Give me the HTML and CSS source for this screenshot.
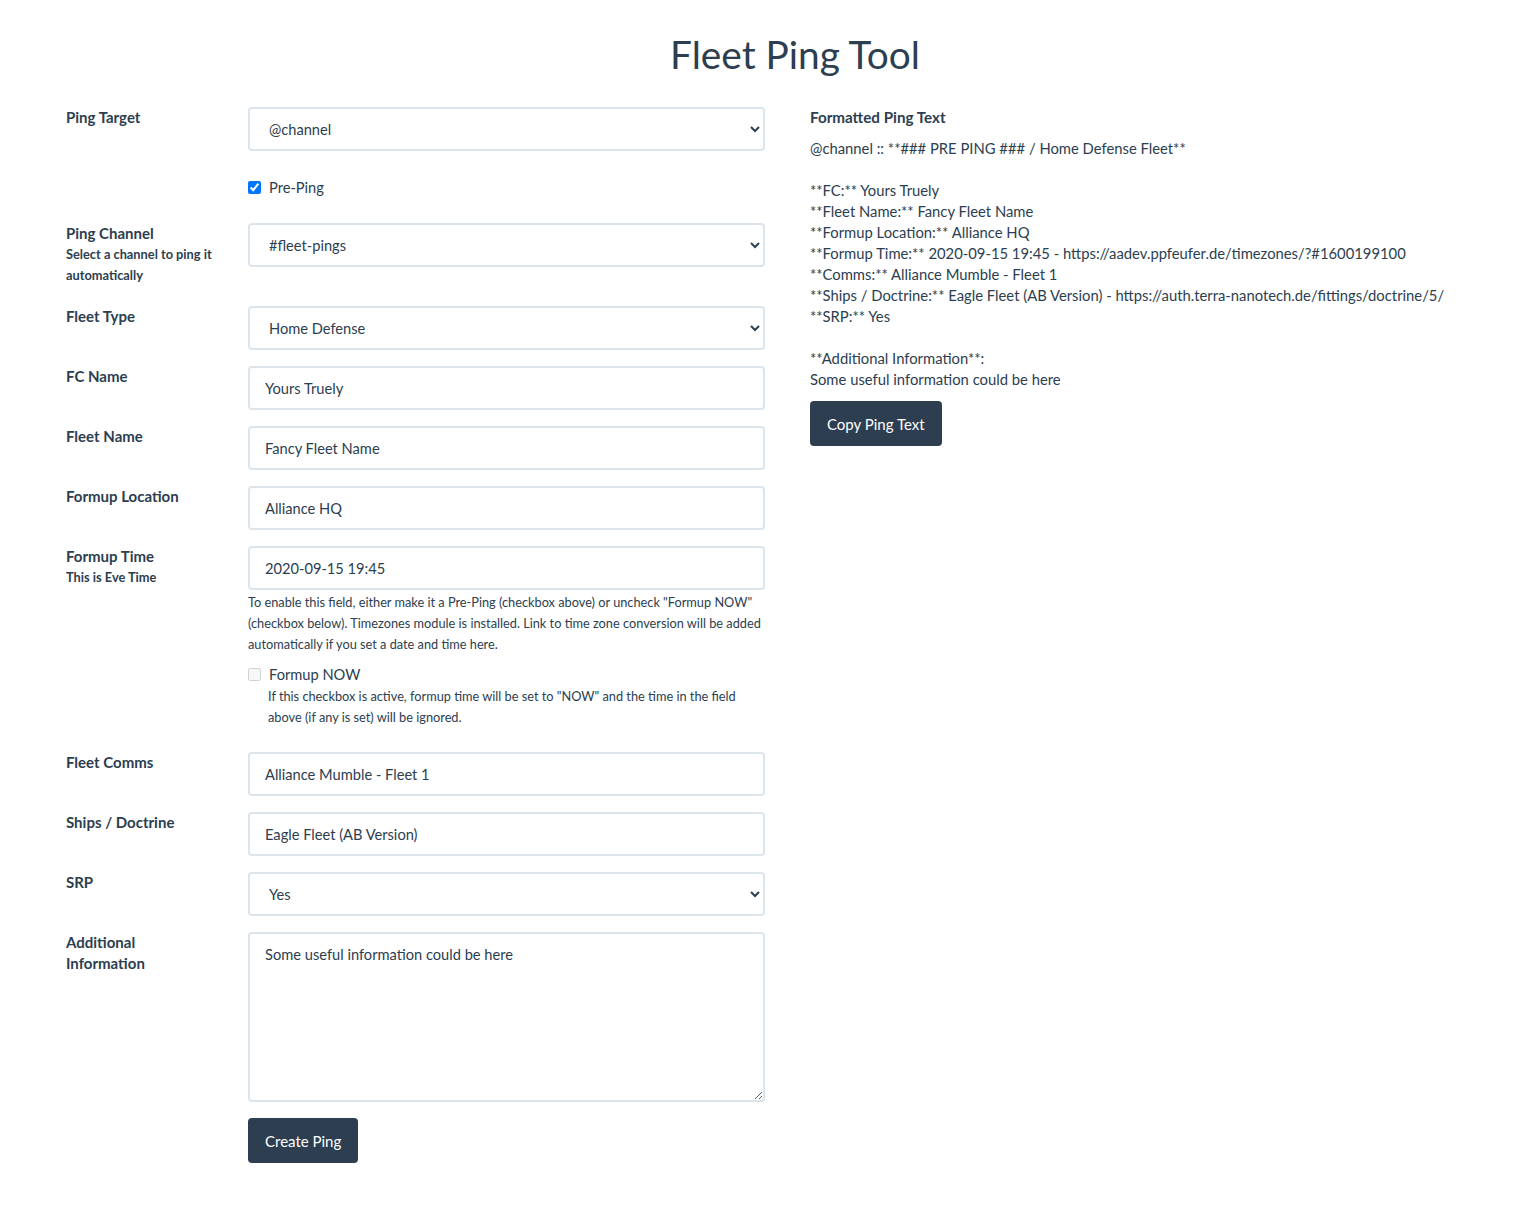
FILE: index.html
```html
<!DOCTYPE html>
<html lang="en">
<head>
<meta charset="utf-8">
<title>Fleet Ping Tool</title>
<link rel="stylesheet" href="styles.css">
</head>
<body>
<div class="page">
  <h1 class="title">Fleet Ping Tool</h1>
  <div class="row">
    <div class="col">
      <form class="form">
        <div class="group">
          <label class="label">Ping Target</label>
          <div class="field">
            <select class="control"><option>@channel</option></select>
          </div>
        </div>
        <div class="group check-row">
          <div class="label"></div>
          <div class="field">
            <label class="check"><input type="checkbox" checked> <span>Pre-Ping</span></label>
          </div>
        </div>
        <div class="group">
          <label class="label">Ping Channel<small>Select a channel to ping it automatically</small></label>
          <div class="field">
            <select class="control"><option>#fleet-pings</option></select>
          </div>
        </div>
        <div class="group">
          <label class="label">Fleet Type</label>
          <div class="field">
            <select class="control"><option>Home Defense</option></select>
          </div>
        </div>
        <div class="group">
          <label class="label">FC Name</label>
          <div class="field"><input class="control" type="text" value="Yours Truely"></div>
        </div>
        <div class="group">
          <label class="label">Fleet Name</label>
          <div class="field"><input class="control" type="text" value="Fancy Fleet Name"></div>
        </div>
        <div class="group">
          <label class="label">Formup Location</label>
          <div class="field"><input class="control" type="text" value="Alliance HQ"></div>
        </div>
        <div class="group group-time">
          <label class="label">Formup Time<small>This is Eve Time</small></label>
          <div class="field">
            <input class="control" type="text" value="2020-09-15 19:45">
            <small class="help">To enable this field, either make it a Pre-Ping (checkbox above) or uncheck "Formup NOW" (checkbox below). Timezones module is installed. Link to time zone conversion will be added automatically if you set a date and time here.</small>
            <label class="check check-now"><input type="checkbox" disabled> <span>Formup NOW</span></label>
            <small class="help help-indent">If this checkbox is active, formup time will be set to "NOW" and the time in the field above (if any is set) will be ignored.</small>
          </div>
        </div>
        <div class="group">
          <label class="label">Fleet Comms</label>
          <div class="field"><input class="control" type="text" value="Alliance Mumble - Fleet 1"></div>
        </div>
        <div class="group">
          <label class="label">Ships / Doctrine</label>
          <div class="field"><input class="control" type="text" value="Eagle Fleet (AB Version)"></div>
        </div>
        <div class="group">
          <label class="label">SRP</label>
          <div class="field">
            <select class="control"><option>Yes</option></select>
          </div>
        </div>
        <div class="group">
          <label class="label">Additional Information</label>
          <div class="field"><textarea class="control area">Some useful information could be here</textarea></div>
        </div>
        <div class="group">
          <div class="label"></div>
          <div class="field"><button type="button" class="btn">Create Ping</button></div>
        </div>
      </form>
    </div>
    <div class="col col-right">
      <h5 class="out-title">Formatted Ping Text</h5>
      <div class="out-text">@channel :: **### PRE PING ### / Home Defense Fleet**

**FC:** Yours Truely
**Fleet Name:** Fancy Fleet Name
**Formup Location:** Alliance HQ
**Formup Time:** 2020-09-15 19:45 - https://aadev.ppfeufer.de/timezones/?#1600199100
**Comms:** Alliance Mumble - Fleet 1
**Ships / Doctrine:** Eagle Fleet (AB Version) - https://auth.terra-nanotech.de/fittings/doctrine/5/
**SRP:** Yes

**Additional Information**:
Some useful information could be here</div>
      <button type="button" class="btn btn-copy">Copy Ping Text</button>
    </div>
  </div>
</div>
</body>
</html>
```

FILE: styles.css
```css
html, body {
  margin: 0;
  padding: 0;
  overflow-x: hidden;
  background: #fff;
}
body {
  font-family: Lato, "Open Sans", sans-serif;
  font-size: 14.65px;
  line-height: 21px;
  color: #212529;
}
.page {
  width: 1488px;
  margin-left: 51px;
}
.title {
  margin: 0;
  padding: 29px 0 27px;
  height: 51px;
  line-height: 51px;
  font-size: 38.8px;
  font-weight: 400;
  color: #2c3e50;
  text-align: center;
}
.row {
  display: flex;
}
.col {
  width: 714px;
  padding: 0 15px;
}
.form {
  margin: 0;
}
.group {
  display: flex;
  margin-bottom: 16px;
}
.label {
  width: 148px;
  margin-right: 34px;
  font-size: 15px;
  font-weight: 700;
  color: #2c3e50;
  display: block;
  padding-bottom: 4px;
}
.label small {
  display: block;
  font-size: 12.8px;
  line-height: 21px;
}
.field {
  width: 517px;
}
.control {
  display: block;
  box-sizing: border-box;
  width: 517px;
  height: 44px;
  margin: 0;
  padding: 0 15px;
  border: 2px solid #dce4ec;
  border-radius: 4px;
  background: #fff;
  font-family: Lato, "Open Sans", sans-serif;
  font-size: 14.65px;
  color: #2c3e50;
  outline: none;
}
select.control {
  padding-left: 15px;
}
.area {
  height: 170px;
  padding-top: 10px;
  line-height: 21px;
  resize: vertical;
}
.check-row {
  padding: 10px 0 9px;
}
.check {
  display: flex;
  align-items: center;
  height: 21px;
  color: #2c3e50;
}
.check input {
  margin: 0 8px 0 0;
  width: 13px;
  height: 13px;
}
.help {
  display: block;
  font-size: 12.75px;
  line-height: 21px;
  color: #2c3e50;
  margin-top: 2px;
}
.check-now {
  margin-top: 9px;
}
.help-indent {
  margin-top: 1px;
  padding-left: 20px;
}
.group-time {
  margin-bottom: 24px;
}
.btn {
  display: inline-block;
  height: 45px;
  padding: 0 17px;
  border: 0;
  border-radius: 4px;
  background: #2c3e50;
  color: #fff;
  font-family: Lato, "Open Sans", sans-serif;
  font-size: 15px;
  cursor: pointer;
}
.col-right {
  width: 714px;
}
.out-title {
  margin: 0 0 10px;
  font-size: 15.2px;
  line-height: 21px;
  font-weight: 700;
  color: #2c3e50;
}
.out-text {
  white-space: pre-wrap;
  font-size: 14.8px;
  color: #2c3e50;
}
.btn-copy {
  margin-top: 11px;
}
```
